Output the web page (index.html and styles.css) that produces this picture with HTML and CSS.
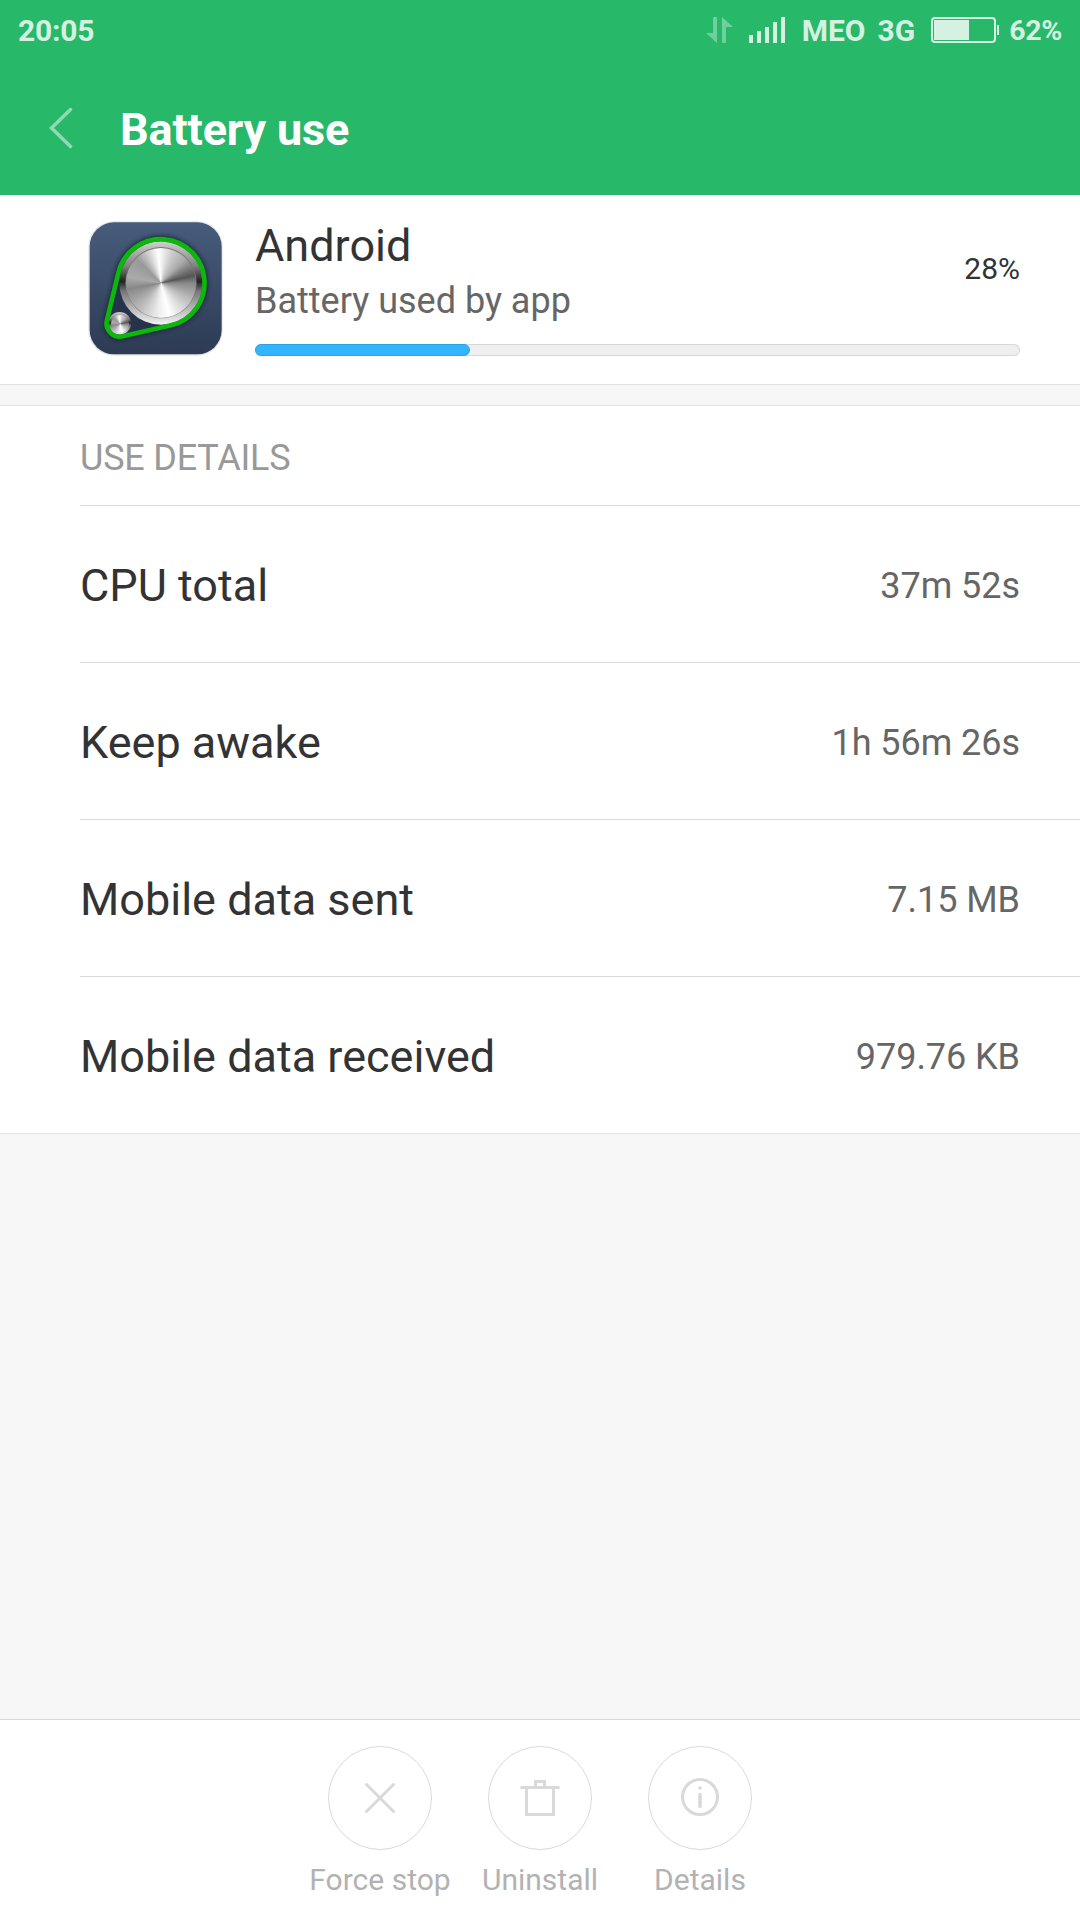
FILE: index.html
```html
<!DOCTYPE html>
<html lang="en">
    <head>
        <meta charset="UTF-8" />
        <meta name="viewport" content="width=device-width, initial-scale=1.0" />
        <title>Battery use</title>
        <link rel="stylesheet" href="styles.css">
    </head>

    <body>
        <header>
            <div class="status-bar">
                <span class="time">20:05</span>
                <svg class="data-arrows" width="28" height="26" viewBox="0 0 28 26">
                    <path d="M11 26V1.5a1.5 1.5 0 0 0-4 0V16H0z" />
                    <path d="M16 0v24.5a1.5 1.5 0 0 0 4 0V10h7z" />
                </svg>
                <svg class="signal" width="36" height="26" viewBox="0 0 36 26">
                    <path d="M0 18h4v8H0zM8 14h4v12H8zM16 10h4v16h-4zM24 5h4v21h-4zM32 0h4v26h-4z" />
                </svg>
                <span class="carrier">MEO</span>
                <span class="network">3G</span>
                <svg class="battery" width="68" height="26" viewBox="0 0 68 26">
                    <rect class="battery-case" x="1" y="1" width="63" height="24" rx="3" />
                    <path d="M3 3h35v20H3zM66 8h2v10h-2z" />
                </svg>
                <span class="percent">62%</span>
            </div>
            <div class="title-bar">
                <svg class="back" width="24" height="42" viewBox="0 0 24 42">
                    <path d="M21.5 2.5L2.5 21L21.5 39.5" />
                </svg>
                <h1>Battery use</h1>
            </div>
        </header>

        <main>
            <section class="app">
                <div class="app-icon">
                    <svg width="135" height="135" viewBox="54 63 405 405">
                        <defs>
                            <linearGradient id="plate" x1="0" y1="0" x2="0" y2="1">
                                <stop offset="0" stop-color="#475c7c" />
                                <stop offset="1" stop-color="#2d3b53" />
                            </linearGradient>
                            <linearGradient id="rim" x1="0" y1="0" x2="0" y2="1">
                                <stop offset="0" stop-color="#d0d0d0" />
                                <stop offset="0.3" stop-color="#808080" />
                                <stop offset="0.48" stop-color="#222" />
                                <stop offset="0.6" stop-color="#777" />
                                <stop offset="1" stop-color="#f4f4f4" />
                            </linearGradient>
                            <filter id="shade" x="-20%" y="-20%" width="140%" height="140%">
                                <feGaussianBlur stdDeviation="7" />
                            </filter>
                        </defs>
                        <rect x="55" y="64" width="403" height="403" rx="76" fill="#e4e4ea" />
                        <rect x="59" y="67" width="396" height="396" rx="73" fill="url(#plate)" />
                        <path class="belt-shadow" filter="url(#shade)" d="M145 219A131 131 0 1 1 303 376L158 409A40 40 0 0 1 111 360z" />
                        <path class="belt-inside" d="M145 219A131 131 0 1 1 303 376L158 409A40 40 0 0 1 111 360z" />
                        <circle cx="273" cy="249" r="125" fill="url(#rim)" />
                        <circle cx="149" cy="370" r="34" fill="url(#rim)" />
                        <circle cx="273" cy="248" r="107" fill="#777" />
                        <path class="belt" d="M145 219A131 131 0 1 1 303 376L158 409A40 40 0 0 1 111 360z" />
                    </svg>
                    <div class="disc"></div>
                    <div class="disc small"></div>
                </div>
                <div class="app-info">
                    <div class="app-text">
                        <div>
                            <h2>Android</h2>
                            <p>Battery used by app</p>
                        </div>
                        <span class="app-percent">28%</span>
                    </div>
                    <div class="bar">
                        <div class="bar-fill" style="width: 28.1%"></div>
                    </div>
                </div>
            </section>

            <section class="details">
                <h3>USE DETAILS</h3>
                <ul>
                    <li><span>CPU total</span><span class="value">37m 52s</span></li>
                    <li><span>Keep awake</span><span class="value">1h 56m 26s</span></li>
                    <li><span>Mobile data sent</span><span class="value">7.15 MB</span></li>
                    <li><span>Mobile data received</span><span class="value">979.76 KB</span></li>
                </ul>
            </section>
        </main>

        <footer>
            <button>
                <svg width="104" height="104" viewBox="0 0 104 104">
                    <circle class="ring" cx="52" cy="52" r="51.5" />
                    <path d="M38.5 38.5l27 27M65.5 38.5l-27 27" />
                </svg>
                Force stop
            </button>
            <button>
                <svg width="104" height="104" viewBox="0 0 104 104">
                    <circle class="ring" cx="52" cy="52" r="51.5" />
                    <path d="M33.5 41.5h37M38.5 42v26.5h27V42M47.5 41v-5.5h9V41" />
                </svg>
                Uninstall
            </button>
            <button>
                <svg width="104" height="104" viewBox="0 0 104 104">
                    <circle class="ring" cx="52" cy="52" r="51.5" />
                    <circle cx="52" cy="51" r="17.5" />
                    <path class="info" d="M52 42v0.01M52 48.500v12" />
                </svg>
                Details
            </button>
        </footer>
    </body>
</html>
```

FILE: styles.css
```css
* {
    margin: 0;
    padding: 0;
    box-sizing: border-box;
}

html {
    font-family: Roboto, Arial, sans-serif;
}

body {
    display: flex;
    flex-direction: column;
    height: 1920px;
    background: #f7f7f7;
    color: #333;
    font-size: 45px;
}

h1,
h2,
h3 {
    font-size: 1em;
    font-weight: normal;
}

/* header */
header {
    height: 195px;
    background: #28b869;
    color: #fff;
}

.status-bar {
    display: flex;
    align-items: center;
    height: 61px;
    padding: 0 18px;
    color: #d4f1e1;
    font-size: 30px;
    font-weight: bold;
    line-height: 61px;
}

.status-bar svg {
    margin-bottom: 1px;
    fill: #d4f1e1;
}

.time {
    margin-right: auto;
    letter-spacing: -0.2px;
}

.status-bar .data-arrows {
    margin-right: 15px;
    fill: #70d09b;
}

.signal {
    margin-right: 17px;
}

.carrier {
    margin-right: 12px;
}

.network {
    margin-right: 16px;
}

.battery {
    margin-right: 10px;
}

.battery-case {
    fill: none;
    stroke: #d4f1e1;
    stroke-width: 2;
}

.percent {
    font-size: 28.5px;
    letter-spacing: -0.3px;
}

.title-bar {
    display: flex;
    align-items: center;
    height: 134px;
    padding-left: 49px;
}

.back {
    fill: none;
    stroke: #8fdab1;
    stroke-width: 3.5;
    stroke-linecap: round;
}

h1 {
    margin-left: 47px;
    padding-top: 3px;
    font-weight: bold;
    letter-spacing: -0.15px;
}

/* app summary */
.app {
    display: flex;
    height: 190px;
    padding: 24px 60px 0 88px;
    border-bottom: 1px solid #e2e2e2;
    background: #fff;
}

.app-icon {
    position: relative;
    width: 135px;
    height: 135px;
    margin: 2px 32px 0 0;
}

.belt-shadow {
    fill: #1c2638;
    stroke: #1c2638;
    stroke-width: 20;
}

.belt-inside {
    fill: #26334a;
}

.belt {
    fill: none;
    stroke: #0bb80b;
    stroke-width: 14;
}

.disc {
    position: absolute;
    top: 27px;
    left: 38px;
    width: 70px;
    height: 70px;
    border-radius: 50%;
    background: conic-gradient(from -5deg, #fff, #ccc 25deg, #aaa 50deg, #555 82deg, #888 95deg, #bbb 125deg, #fff 170deg, #eee 190deg, #bbb 225deg, #888 265deg, #aaa 285deg, #999 320deg, #fff);
}

.disc.small {
    top: 94px;
    left: 23px;
    width: 18px;
    height: 18px;
}

.app-info {
    flex: 1;
}

.app-text {
    display: flex;
    justify-content: space-between;
}

h2 {
    line-height: 54px;
}

p {
    color: #666;
    font-size: 36px;
    line-height: 56px;
}

.app-percent {
    font-size: 30px;
    line-height: 100px;
}

.bar {
    height: 12px;
    margin-top: 15px;
    border-radius: 6px;
    background: #efefef;
    box-shadow: inset 0 0 0 1px #d8d8d8;
}

.bar-fill {
    height: 12px;
    border: 1px solid #2da1e6;
    border-radius: 6px;
    background: #33b4ff;
}

/* details */
.details {
    margin-top: 20px;
    padding-left: 80px;
    border-top: 1px solid #e2e2e2;
    border-bottom: 1px solid #e2e2e2;
    background: #fff;
}

h3 {
    height: 99px;
    padding-top: 4px;
    color: #999;
    font-size: 36px;
    letter-spacing: -0.2px;
    line-height: 96px;
}

li {
    display: flex;
    align-items: center;
    justify-content: space-between;
    height: 157px;
    padding: 3px 60px 0 0;
    border-top: 1px solid #d9d9d9;
    list-style: none;
}

.value {
    color: #666;
    font-size: 36px;
    letter-spacing: -0.05px;
}

/* bottom actions */
footer {
    display: flex;
    justify-content: center;
    height: 201px;
    margin-top: auto;
    padding-top: 26px;
    border-top: 1px solid #d9d9d9;
    background: #fff;
}

button {
    display: flex;
    flex-direction: column;
    align-items: center;
    width: 160px;
    border: none;
    background: none;
    color: #b2b2b2;
    font-family: inherit;
    font-size: 30px;
    line-height: 60px;
    white-space: nowrap;
}

button svg {
    flex: none;
    fill: none;
    stroke: #d9d9d9;
    stroke-width: 3;
    stroke-linecap: round;
}

.ring {
    stroke-width: 1;
}

.info {
    stroke-width: 3.5;
}
```
